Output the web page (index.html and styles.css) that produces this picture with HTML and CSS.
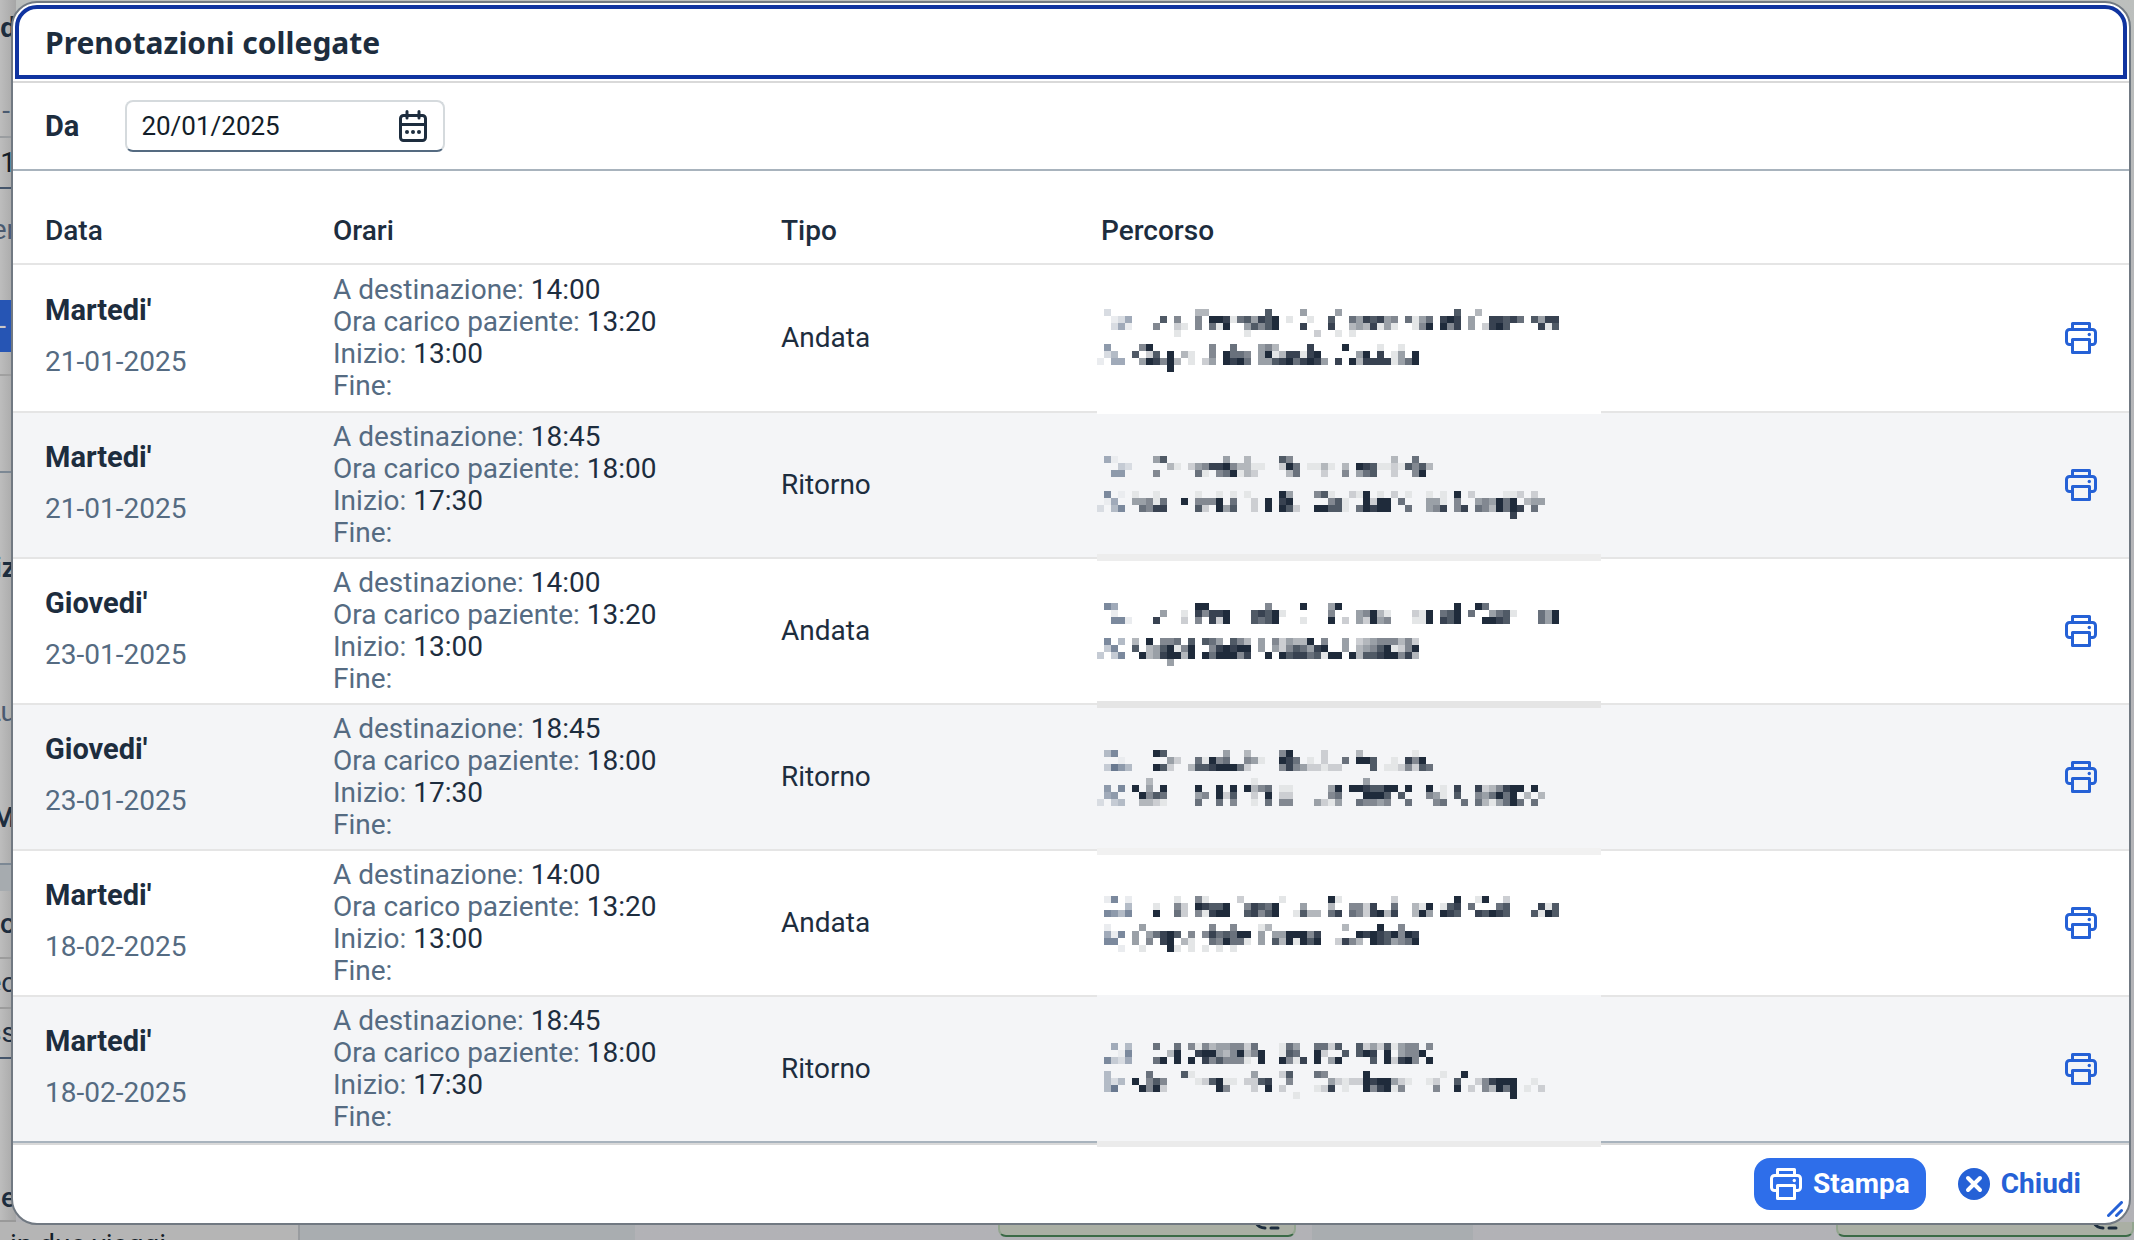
FILE: index.html
```html
<!DOCTYPE html>
<html lang="it">
<head>
    <meta charset="UTF-8">
    <meta name="viewport" content="width=device-width, initial-scale=1.0">
    <title>Prenotazioni collegate</title>
    <link rel="stylesheet" href="styles.css">
</head>
<body>
    <svg class="sprite" aria-hidden="true">
        <symbol id="icon-print" viewBox="0 0 32 32">
            <g fill="none" stroke="currentColor" stroke-width="3" stroke-linejoin="round">
                <path d="M7.500 7.500V1.500H24.500V7.500"/>
                <path d="M7 22.500H4.500a3 3 0 0 1-3-3V10.500a3 3 0 0 1 3-3H27.500a3 3 0 0 1 3 3V19.500a3 3 0 0 1-3 3H25"/>
                <path d="M7.500 17.500H24.500V30.500H7.500Z"/>
            </g>
            <circle cx="24.300" cy="12.500" r="1.700" fill="currentColor"/>
        </symbol>
        <symbol id="icon-calendar" viewBox="0 0 28 32">
            <g fill="none" stroke="currentColor" stroke-width="3">
                <rect x="1.500" y="5.500" width="25" height="25" rx="3"/>
                <path d="M1.500 14.500H26.500"/>
                <path d="M8 1.500V8M20 1.500V8" stroke-linecap="round"/>
            </g>
            <g fill="currentColor">
                <circle cx="8" cy="22" r="2"/>
                <circle cx="14" cy="22" r="2"/>
                <circle cx="20" cy="22" r="2"/>
            </g>
        </symbol>
        <symbol id="icon-decline" viewBox="0 0 32 32">
            <circle cx="16" cy="16" r="16" fill="currentColor"/>
            <path d="M10 10L22 22M22 10L10 22" stroke="#fff" stroke-width="4" stroke-linecap="round"/>
        </symbol>
        <symbol id="icon-value-help" viewBox="0 0 28 8">
            <path d="M2 1Q5 6 11 6M17 6H24" fill="none" stroke="currentColor" stroke-width="3" stroke-linecap="round"/>
        </symbol>
    </svg>

    <div class="backdrop" aria-hidden="true">
        <div class="strip">
            <div class="frag frag-title">d</div>
            <div class="frag frag-dash">-</div>
            <div class="frag frag-field">1</div>
            <div class="frag frag-label">er</div>
            <div class="frag frag-button">-</div>
            <div class="frag frag-toolbar"></div>
            <div class="frag frag-space"></div>
            <div class="frag frag-section">iz</div>
            <div class="frag frag-link">Lu</div>
            <div class="frag frag-head">M</div>
            <div class="frag frag-band"></div>
            <div class="frag frag-row">no</div>
            <div class="frag frag-cell">ec</div>
            <div class="frag frag-input">ss</div>
            <div class="frag frag-last">e</div>
        </div>
        <div class="bottom">
            <div class="bottom-text">in due viaggi</div>
            <div class="bottom-dark"></div>
            <div></div>
            <div class="bottom-green"><svg class="icon-help"><use href="#icon-value-help"/></svg></div>
            <div></div>
            <div class="bottom-dark"></div>
            <div></div>
            <div class="bottom-green"><svg class="icon-help"><use href="#icon-value-help"/></svg></div>
        </div>
    </div>

    <div class="dialog" role="dialog" aria-labelledby="dialog-title">
        <header class="dialog-header">
            <h1 id="dialog-title">Prenotazioni collegate</h1>
        </header>

        <div class="filter">
            <label for="from-date">Da</label>
            <div class="date-field">
                <input type="text" id="from-date" value="20/01/2025">
                <button type="button" class="icon-button" aria-label="Apri calendario">
                    <svg class="icon-cal"><use href="#icon-calendar"/></svg>
                </button>
            </div>
        </div>

        <table class="bookings">
            <colgroup>
                <col class="col-date">
                <col class="col-times">
                <col class="col-type">
                <col>
                <col class="col-action">
            </colgroup>
            <thead>
                <tr>
                    <th>Data</th>
                    <th>Orari</th>
                    <th>Tipo</th>
                    <th>Percorso</th>
                    <th></th>
                </tr>
            </thead>
            <tbody id="rows"></tbody>
        </table>

        <footer class="dialog-footer">
            <button type="button" class="btn btn-primary">
                <svg class="icon"><use href="#icon-print"/></svg>
                Stampa
            </button>
            <button type="button" class="btn btn-link">
                <svg class="icon"><use href="#icon-decline"/></svg>
                Chiudi
            </button>
        </footer>
        <svg class="resize" viewBox="0 0 16 16">
            <path d="M1.500 14.500L14.500 1.500M9.500 14.500L14.500 9.500"/>
        </svg>
    </div>

    <script src="script.js"></script>
</body>
</html>
```

FILE: styles.css
```css
* {
    box-sizing: border-box;
}

body {
    margin: 0;
    padding: 1px 3px 15px 11px;
    background: #b6b7b8;
    color: #1d2d3e;
    font-family: Roboto, "Liberation Sans", sans-serif;
    font-size: 28px;
    line-height: 32px;
}

button,
input {
    font: inherit;
    color: inherit;
    margin: 0;
    padding: 0;
    border: 0;
    background: none;
}

.sprite {
    position: absolute;
    width: 0;
    height: 0;
}

/* Page behind the dialog */
.backdrop {
    position: fixed;
    inset: 0;
    overflow: hidden;
    background: linear-gradient(#bcbfbd, #b6b7b9 20%, #b2b2b6);
}

.strip {
    width: 16px;
    background: linear-gradient(90deg, #bdbdbd, #a6a6a6);
}

.frag {
    display: flex;
    align-items: center;
    justify-content: flex-end;
    height: 48px;
    overflow: hidden;
    border-bottom: 2px solid transparent;
}

.frag-title {
    height: 86px;
    padding-bottom: 28px;
    font-weight: 700;
}

.frag-dash {
    height: 52px;
    padding-right: 6px;
    color: #4a5a70;
    border-color: #9a9da0;
}

.frag-field {
    height: 51px;
    color: #131e29;
    border-color: #45556b;
}

.frag-label {
    height: 111px;
    padding-bottom: 28px;
    color: #4a5a70;
}

.frag-button {
    height: 52px;
    padding-right: 10px;
    color: #c8c8c8;
    background: #2655b4;
    border: 0;
}

.frag-toolbar {
    height: 24px;
    border-color: #a0a0a0;
}

.frag-space {
    height: 97px;
    border-color: #7c8894;
}

.frag-section {
    height: 192px;
    font-weight: 700;
}

.frag-link {
    height: 96px;
    color: #4a5a70;
}

.frag-head {
    height: 104px;
    padding-top: 12px;
    font-weight: 700;
    border-color: #7c8894;
}

.frag-band {
    height: 26px;
    background: #a6abaf;
    border: 0;
}

.frag-row {
    height: 68px;
    font-weight: 500;
    border-color: #9c9c9c;
}

.frag-cell {
    height: 50px;
    border-color: #9c9c9c;
}

.frag-input {
    height: 50px;
    border-color: #45556b;
}

.frag-last {
    height: 163px;
    padding-top: 116px;
    font-weight: 500;
    border-color: #999;
}

.bottom {
    display: grid;
    grid-template-columns: 300fr 335fr 363fr 298fr 16fr 161fr 363fr 298fr;
    height: 60px;
}

.bottom-text {
    padding-left: 10px;
    line-height: 46px;
    color: #131e29;
    background: #b5b5b5;
    border-right: 2px solid #999c9f;
}

.bottom-dark {
    background: #a9adb0;
}

.bottom-green {
    display: flex;
    justify-content: flex-end;
    align-items: flex-start;
    height: 15px;
    padding-right: 12px;
    background: #aaafa4;
    border: 2px solid #93a58f;
    border-top: 0;
    border-bottom-color: #3b6a46;
    border-radius: 0 0 8px 8px;
}

/* Dialog */
.dialog {
    position: relative;
    background: #fff;
    border: 2px solid #717982;
    border-radius: 26px;
}

.dialog-header {
    padding: 2px;
    border-bottom: 2px solid #d9d9d9;
}

.dialog-header h1 {
    margin: 0;
    padding: 18px 26px 16px;
    border: 4px solid #1034a0;
    border-radius: 22px 22px 0 0;
    font-family: "Noto Sans", sans-serif;
    font-size: 30px;
    line-height: 32px;
    font-weight: 700;
}

.filter {
    display: flex;
    align-items: center;
    gap: 46px;
    height: 88px;
    padding: 0 32px;
    border-bottom: 2px solid #a8b3bd;
}

.filter label {
    font-size: 29px;
    font-weight: 700;
}

.date-field {
    display: flex;
    align-items: center;
    width: 320px;
    height: 52px;
    padding: 0 16px 0 14px;
    border: 2px solid #d5dadd;
    border-bottom-color: #556b81;
    border-radius: 8px;
}

.date-field input {
    flex: 1;
    min-width: 0;
    color: #131e29;
    font-size: 26px;
}

.icon-button {
    display: flex;
    cursor: pointer;
}

.icon,
.icon-cal {
    display: block;
    width: 32px;
    height: 32px;
}

.icon-cal {
    width: 28px;
}

.icon-help {
    width: 28px;
    height: 8px;
}

.bookings {
    width: 100%;
    table-layout: fixed;
    border-collapse: separate;
    border-spacing: 0;
}

.col-date {
    width: 304px;
}

.col-times {
    width: 448px;
}

.col-type {
    width: 320px;
}

.col-action {
    width: 80px;
}

.bookings th {
    height: 94px;
    padding: 28px 16px 0;
    text-align: left;
    font-weight: 500;
    border-bottom: 2px solid #e5e5e5;
}

.bookings td {
    height: 146px;
    padding: 0 16px;
    border-bottom: 2px solid #e5e5e5;
}

.bookings th:first-child,
.bookings td:first-child {
    padding-left: 32px;
}

.bookings td:first-child {
    padding-bottom: 4px;
}

.bookings tbody tr:first-child td {
    height: 148px;
}

.bookings tbody tr:nth-child(even) {
    background: #f4f5f7;
}

.bookings tbody tr:last-child td {
    border-bottom-color: #a8b3bd;
}

.bookings td.route {
    padding: 0 12px;
    vertical-align: top;
}

.day {
    display: block;
    margin-bottom: 20px;
    font-size: 29px;
    font-weight: 700;
}

.muted {
    color: #556b82;
}

.times {
    margin: 0;
    padding: 0;
    list-style: none;
}

.mosaic {
    position: relative;
    display: block;
    width: 504px;
    height: 140px;
    overflow: visible;
}

.print {
    color: #2561d6;
}

.dialog-footer {
    display: flex;
    justify-content: flex-end;
    align-items: center;
    gap: 16px;
    height: 80px;
    padding: 0 32px 0 0;
    border-top: 2px solid #d9d9d9;
    border-radius: 0 0 24px 24px;
}

.btn {
    display: flex;
    align-items: center;
    gap: 11px;
    height: 52px;
    padding: 0 16px;
    border-radius: 16px;
    font-weight: 700;
    cursor: pointer;
}

.btn-primary {
    color: #fff;
    background: #2e6eea;
}

.btn-link {
    color: #2561d6;
}

.resize {
    position: absolute;
    right: 6px;
    bottom: 6px;
    width: 16px;
    height: 16px;
    fill: none;
    stroke: #2561d6;
    stroke-width: 3;
    stroke-linecap: round;
}
```

FILE: script.js
```js
const CELL = 7;

// Each mosaic line is a list of "column:shades" runs, shade 1 (light) to 9 (dark)
const bookings = [
    {
        day: "Martedi'", date: '21-01-2025', there: true, top: 44,
        smear: { y: 145, h: 4, fill: '#ffffff' },
        mosaic: [
            '1:2 14:33 24:7 29:4 34:4 51:7 54:3',
            '2:125 9:7 11:5 14:5 16:9981674879 27:1 30:1 33:7 36:6487845 44:6146 49:898 53:4 56:88786 62:7488',
            '2:251 8:5 11:21 14:5 16:619 21:47579 29:8 33:8 36:3438141 45:159 49:958 53:4 55:2897 63:817',
            '11:1 21:1 31:2 34:1 36:1',
            '',
            '1:6 6:59 16:5 19:6 23:453 30:8 35:9 40:1 43:1',
            '1:24 5:7 7:27 10:9 12:31 16:5 18:9665 23:4913881 30:89 37:49 40:8 42:14 45:9',
            '0:1 2:55 6:498593 13:1 15:24 18:9896 23:4478968984 34:8 36:93888814 44:69',
            '10:9'
        ]
    },
    {
        day: "Martedi'", date: '21-01-2025', there: false, top: 43,
        smear: { y: 141, h: 7, fill: '#ededed' },
        mosaic: [
            '1:51 8:47 18:4 21:3 26:75 42:3 45:6',
            '3:32 10:31 13:24588953311 26:296 30:1131 35:3 37:98711217573',
            '2:66 8:5 14:61 17:569132 27:36 32:2 35:5 37:467 42:2 45:59',
            '',
            '',
            '1:7 3:1 5:1 8:1 14:1 17:1 19:1 21:1 26:94 31:571 36:21 38:9 40:1 42:2 44:1 47:1 49:1 51:9 53:2 58:112 62:2',
            '1:15 5:44516 12:9 14:555 17:9 19:6 22:2 24:9 26:89 33:571 38:9299 43:6 47:441 51:5 54:454969 61:34 63:4',
            '0:2 2:47 6:6588 14:72 17:947 22:2 24:9 26:972 31:99771 37:69899 44:6 47:458 51:58 54:6539698 62:6',
            '59:8'
        ]
    },
    {
        day: "Giovedi'", date: '23-01-2025', there: true, top: 44,
        smear: { y: 142, h: 7, fill: '#e5e5e5' },
        mosaic: [
            '1:75 14:99 24:5 29:9 33:49 51:9 54:96',
            '2:1 9:4 12:1 14:85889 22:78791 33:5 37:45931 45:219 49:679 53:6 56:4671 63:649',
            '2:771 8:8 12:2 14:5 16:829 22:7679 29:1 33:9 35:2 37:42945 45:119 49:879 55:9987 63:649',
            '',
            '',
            '1:7 3:4 5:3 7:9 9:556 13:7 15:764 19:753 23:4 25:524339 32:5 35:4 37:234555352',
            '1:37 5:7 7:3479159 16:589899 23:4 25:42576489 35:4 37:345791259',
            '0:3 2:37 6:93489939 15:9699958 24:9 26:97886719 34:9 36:9377899583',
            '10:4'
        ]
    },
    {
        day: "Giovedi'", date: '23-01-2025', there: false, top: 45,
        smear: { y: 143, h: 7, fill: '#f1f1f1' },
        mosaic: [
            '1:47 8:97 18:4 21:3 26:59 32:2 37:3 45:1',
            '3:1 10:42 14:61956 21:541 26:986 30:1 32:2 35:6 37:997 42:1 44:859',
            '1:3864 8:972 13:377899962 26:585422122 39:7 41:1125276',
            '',
            '7:3 22:1 38:4',
            '1:6 3:7 5:9 7:4 9:9 14:9 17:9 19:9 21:9356 26:11 33:49 36:9987799 44:9 47:9 49:1 51:8 54:8235899 62:9',
            '1:56 6:9576 14:45 17:927 22:2 24:9 26:22 33:56 38:9997 43:7 47:541 51:7 54:546969 61:3 63:3',
            '0:2 2:34 6:3321 14:6 17:6 19:5 22:1 24:6 26:55 31:4214 37:65545 44:6 48:56 52:6 54:6314696 62:6'
        ]
    },
    {
        day: "Martedi'", date: '18-02-2025', there: true, top: 45,
        smear: { y: 144, h: 3, fill: '#f4f5f7' },
        mosaic: [
            '1:17 4:1 11:1 14:51 20:2 26:1 33:91 42:2 51:9 54:19 58:2',
            '4:4 8:1 11:52 14:98779 21:58769 29:4 33:3 36:5528 42:6 45:319 49:178 53:6 57:67 63:817',
            '1:7647 8:9 11:62 14:51899 21:78579 28:1733 33:68 36:6528938 45:394 49:987 54:87987 62:7197',
            '',
            '1:1 6:4 16:5 19:5 23:13 35:3 40:9 43:5',
            '1:517 5:4 7:46897 13:5 15:5867699 23:4 25:4499958 37:989879598',
            '1:77 5:4 7:5 9:89 12:31 16:659661 23:4 25:7391979 34:2853 39:9874569',
            '3:1 6:1 10:91 13:1 15:1 17:1 19:1'
        ]
    },
    {
        day: "Martedi'", date: '18-02-2025', there: false, top: 46,
        smear: { y: 144, h: 6, fill: '#ebebeb' },
        mosaic: [
            '2:5 4:4 8:6 11:6 13:5153445526 26:164 31:6627 37:724271455 47:5',
            '3:17 10:39 14:8994359359 26:176 31:92 35:7 37:798 41:9 43:4559',
            '1:7325 8:69 11:9 13:9 15:8575551 23:9 26:9518 31:9 33:49 39:7 41:92895 47:9',
            '',
            '1:4 7:6 12:71 22:4 26:27 31:65 38:9 49:1 52:9',
            '1:424 5:9 7:575 14:127911 21:2278 27:5 33:42122989 41:9421 47:12 51:7 54:258999 62:1',
            '1:48 6:9592 17:95 22:2 24:9 26:2 31:128 35:1 38:958915 48:5 51:9 53:2 55:53969 61:1 63:2',
            '28:1 59:9'
        ]
    }
];

const LIGHT = [253, 253, 253];
const INK = [31, 43, 59];
const LABEL = [86, 104, 130];

function shade(level, col) {
    const dark = col < 5 ? LABEL : INK;
    const t = level / 9;
    return `rgb(${LIGHT.map((c, i) => Math.round(c + (dark[i] - c) * t)).join(',')})`;
}

function drawMosaic(booking) {
    let rects = '';
    booking.mosaic.forEach((line, row) => {
        line.split(' ').filter(Boolean).forEach(run => {
            const [start, levels] = run.split(':');
            [...levels].forEach((level, i) => {
                const col = Number(start) + i;
                rects += `<rect x="${col * CELL}" y="${booking.top + row * CELL}" width="${CELL}" height="${CELL}" fill="${shade(level, col)}"/>`;
            });
        });
    });
    const s = booking.smear;
    rects += `<rect x="0" y="${s.y}" width="504" height="${s.h}" fill="${s.fill}"/>`;
    return `<svg class="mosaic" shape-rendering="crispEdges" aria-hidden="true">${rects}</svg>`;
}

document.getElementById('rows').innerHTML = bookings.map(b => `
    <tr>
        <td><span class="day">${b.day}</span><span class="muted">${b.date}</span></td>
        <td>
            <ul class="times">
                <li><span class="muted">A destinazione:</span> ${b.there ? '14:00' : '18:45'}</li>
                <li><span class="muted">Ora carico paziente:</span> ${b.there ? '13:20' : '18:00'}</li>
                <li><span class="muted">Inizio:</span> ${b.there ? '13:00' : '17:30'}</li>
                <li><span class="muted">Fine:</span></li>
            </ul>
        </td>
        <td>${b.there ? 'Andata' : 'Ritorno'}</td>
        <td class="route">${drawMosaic(b)}</td>
        <td>
            <button type="button" class="icon-button print" aria-label="Stampa ${b.date}">
                <svg class="icon"><use href="#icon-print"/></svg>
            </button>
        </td>
    </tr>`).join('');
```
